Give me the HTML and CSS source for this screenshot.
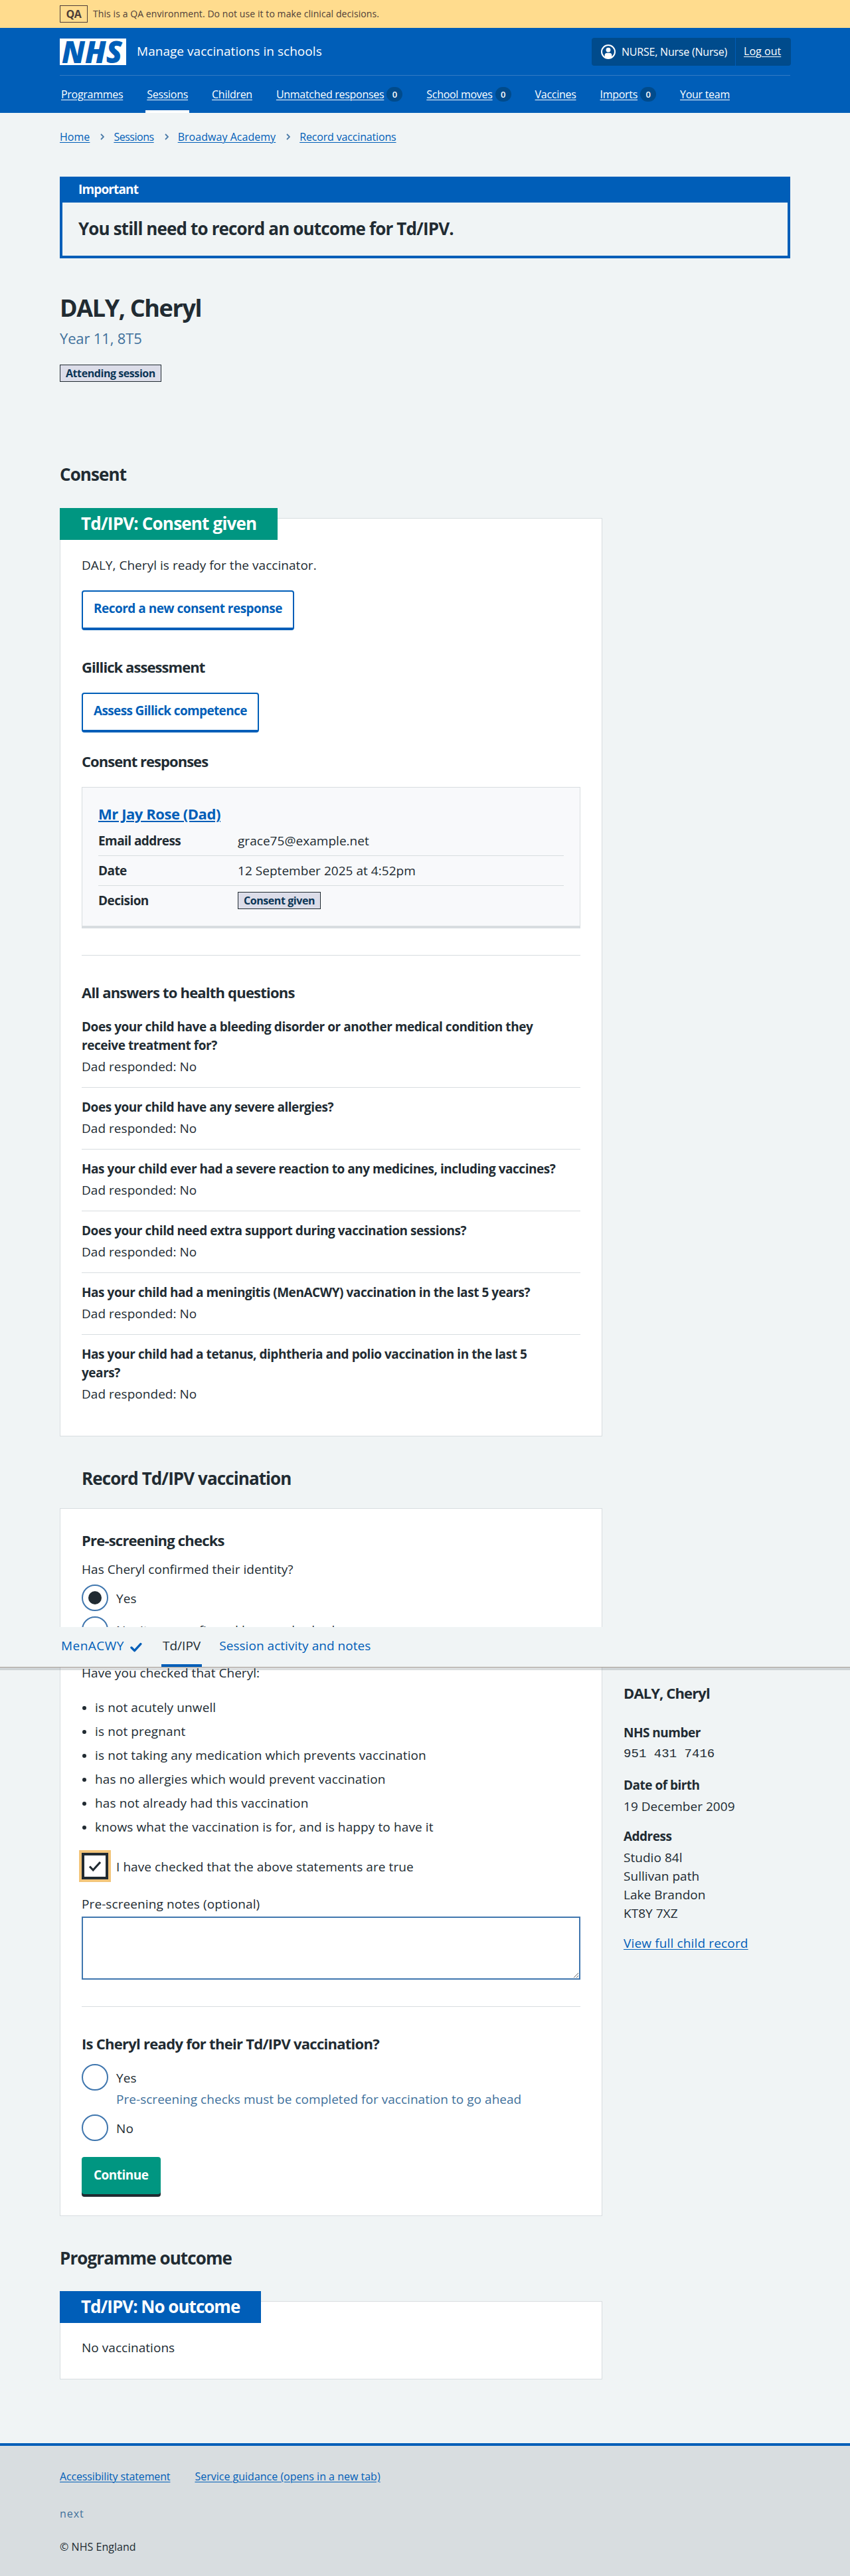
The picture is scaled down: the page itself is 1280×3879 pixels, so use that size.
FILE: index.html
```html
<!DOCTYPE html>
<html lang="en">
<head>
<meta charset="utf-8">
<title>DALY, Cheryl – Manage vaccinations in schools</title>
<link rel="stylesheet" href="styles.css">
</head>
<body>
<div class="environment">
  <div class="container environment__row"><strong class="environment__tag">QA</strong><span class="environment__text">This is a QA environment. Do not use it to make clinical decisions.</span></div>
</div>
<header class="header">
  <div class="container">
    <div class="header__top">
      <a class="header__service" href="#">
        <svg class="logo" viewBox="0 0 100 40" width="100" height="40" role="img" aria-label="NHS"><rect width="100" height="40" fill="#fff"/><text x="3" y="36.5" textLength="91" lengthAdjust="spacingAndGlyphs" class="logo__text">NHS</text></svg>
        <span class="header__name">Manage vaccinations in schools</span>
      </a>
      <div class="account">
        <span class="account__user"><svg width="22" height="22" viewBox="0 0 22 22"><circle cx="11" cy="11" r="10" fill="none" stroke="#fff" stroke-width="2"/><circle cx="11" cy="8.2" r="3.4" fill="#fff"/><path d="M5.6 19v-2.6a3.6 3.6 0 0 1 3.6-3.6h3.6a3.6 3.6 0 0 1 3.6 3.6V19a10 10 0 0 1-10.8 0z" fill="#fff"/></svg>NURSE, Nurse (Nurse)</span>
        <a class="account__logout" href="#">Log out</a>
      </div>
    </div>
    <nav class="nav">
      <a class="nav__item" href="#"><span>Programmes</span></a>
      <a class="nav__item nav__item--current" href="#"><span>Sessions</span></a>
      <a class="nav__item" href="#"><span>Children</span></a>
      <a class="nav__item" href="#"><span>Unmatched responses</span><b class="count">0</b></a>
      <a class="nav__item" href="#"><span>School moves</span><b class="count">0</b></a>
      <a class="nav__item" href="#"><span>Vaccines</span></a>
      <a class="nav__item" href="#"><span>Imports</span><b class="count">0</b></a>
      <a class="nav__item" href="#"><span>Your team</span></a>
    </nav>
  </div>
</header>

<div class="container page">
  <nav class="breadcrumb">
    <a href="#">Home</a><svg class="chevron" viewBox="0 0 6 10"><path d="M1 1l4 4-4 4"/></svg><a class="breadcrumb__tight" href="#">Sessions</a><svg class="chevron" viewBox="0 0 6 10"><path d="M1 1l4 4-4 4"/></svg><a href="#">Broadway Academy</a><svg class="chevron" viewBox="0 0 6 10"><path d="M1 1l4 4-4 4"/></svg><a class="breadcrumb__last" href="#">Record vaccinations</a>
  </nav>

  <section class="banner">
    <h2 class="banner__title">Important</h2>
    <p class="banner__text">You still need to record an outcome for Td/IPV.</p>
  </section>

  <h1 class="title">DALY, Cheryl</h1>
  <p class="caption">Year 11, 8T5</p>
  <strong class="tag">Attending session</strong>

  <div class="columns">
    <main class="main">
      <h2 class="heading-m">Consent</h2>
      <section class="card card--feature">
        <h3 class="card__tab card__tab--green">Td/IPV: Consent given</h3>
        <p class="card__intro">DALY, Cheryl is ready for the vaccinator.</p>
        <a class="button button--secondary" href="#">Record a new consent response</a>
        <h4 class="heading-s heading-s--spaced">Gillick assessment</h4>
        <a class="button button--secondary button--tight" href="#">Assess Gillick competence</a>
        <h4 class="heading-s heading-s--responses">Consent responses</h4>
        <article class="response">
          <h5 class="response__name"><a href="#">Mr Jay Rose (Dad)</a></h5>
          <dl class="summary">
            <div class="summary__row"><dt>Email address</dt><dd>grace75@example.net</dd></div>
            <div class="summary__row"><dt>Date</dt><dd>12 September 2025 at 4:52pm</dd></div>
            <div class="summary__row"><dt>Decision</dt><dd><strong class="tag">Consent given</strong></dd></div>
          </dl>
        </article>
        <hr class="rule">
        <h4 class="heading-s">All answers to health questions</h4>
        <dl class="answers">
          <div class="answers__item"><dt>Does your child have a bleeding disorder or another medical condition they receive treatment for?</dt><dd>Dad responded: No</dd></div>
          <div class="answers__item"><dt>Does your child have any severe allergies?</dt><dd>Dad responded: No</dd></div>
          <div class="answers__item"><dt>Has your child ever had a severe reaction to any medicines, including vaccines?</dt><dd>Dad responded: No</dd></div>
          <div class="answers__item"><dt>Does your child need extra support during vaccination sessions?</dt><dd>Dad responded: No</dd></div>
          <div class="answers__item"><dt>Has your child had a meningitis (MenACWY) vaccination in the last 5 years?</dt><dd>Dad responded: No</dd></div>
          <div class="answers__item"><dt>Has your child had a tetanus, diphtheria and polio vaccination in the last 5 years?</dt><dd>Dad responded: No</dd></div>
        </dl>
      </section>

      <h2 class="heading-m heading-m--record">Record Td/IPV vaccination</h2>
      <form class="card card--form">
        <h3 class="heading-s">Pre-screening checks</h3>
        <p class="question">Has Cheryl confirmed their identity?</p>
        <div class="option"><span class="radio radio--checked"></span><label>Yes</label></div>
        <div class="option"><span class="radio"></span><label>No, it was confirmed by somebody else</label></div>
        <p class="checked-that">Have you checked that Cheryl:</p>
        <ul class="bullets">
          <li>is not acutely unwell</li>
          <li>is not pregnant</li>
          <li>is not taking any medication which prevents vaccination</li>
          <li>has no allergies which would prevent vaccination</li>
          <li>has not already had this vaccination</li>
          <li>knows what the vaccination is for, and is happy to have it</li>
        </ul>
        <div class="option"><span class="checkbox"><svg width="20" height="17" viewBox="0 0 20 17"><path d="M2 8.5l5.2 5.5L18 2"/></svg></span><label>I have checked that the above statements are true</label></div>
        <label class="notes-label">Pre-screening notes (optional)</label>
        <textarea class="notes"></textarea>
        <hr class="rule">
        <h3 class="heading-s heading-s--ready">Is Cheryl ready for their Td/IPV vaccination?</h3>
        <div class="option"><span class="radio"></span><label>Yes</label></div>
        <p class="hint">Pre-screening checks must be completed for vaccination to go ahead</p>
        <div class="option"><span class="radio"></span><label>No</label></div>
        <a class="button button--primary" href="#">Continue</a>
      </form>

      <h2 class="heading-m heading-m--outcome">Programme outcome</h2>
      <section class="card card--outcome">
        <h3 class="card__tab card__tab--blue">Td/IPV: No outcome</h3>
        <p class="card__empty">No vaccinations</p>
      </section>
    </main>

    <aside class="child">
      <h3 class="heading-s">DALY, Cheryl</h3>
      <dl class="details">
        <dt>NHS number</dt><dd class="details__number">951 431 7416</dd>
        <dt>Date of birth</dt><dd>19 December 2009</dd>
        <dt>Address</dt><dd>Studio 84l<br>Sullivan path<br>Lake Brandon<br>KT8Y 7XZ</dd>
      </dl>
      <a class="child__link" href="#">View full child record</a>
    </aside>
  </div>
</div>

<nav class="tabs">
  <div class="container tabs__list">
    <a class="tabs__item tabs__item--done" href="#">MenACWY<svg width="18" height="15" viewBox="0 0 18 15"><path d="M2 8l4.6 4.6L15.8 2.6"/></svg></a>
    <a class="tabs__item tabs__item--current" href="#">Td/IPV</a>
    <a class="tabs__item" href="#">Session activity and notes</a>
  </div>
</nav>

<footer class="footer">
  <div class="container">
    <div class="footer__links"><a href="#">Accessibility statement</a><a href="#">Service guidance (opens in a new tab)</a></div>
    <p class="footer__version">next</p>
    <p class="footer__copyright">© NHS England</p>
  </div>
</footer>
</body>
</html>
```
FILE: styles.css
```css
* { box-sizing: border-box; }
body, h1, h2, h3, h4, h5, p, dl, dd, ul, hr { margin: 0; padding: 0; }
body {
  position: relative;
  background: #f0f4f5;
  color: #212b32;
  font: 400 19px/28px "Open Sans", "Noto Sans", sans-serif;
  letter-spacing: 0.002em;
}
a { color: #005eb8; text-decoration-thickness: 1px; text-underline-offset: 2px; }
svg { flex: none; }
.container { width: 1100px; margin: 0 auto; }

.environment { height: 42px; background: #ffdc8e; color: #4d3c38; }
.environment__row { display: flex; align-items: center; height: 42px; gap: 8px; font-size: 14px; }
.environment__tag { height: 26px; width: 42px; border: 1px solid; text-align: center; font-size: 16px; font-weight: 700; line-height: 24px; letter-spacing: -0.03em; }
.environment__text { letter-spacing: 0.006em; }

.header { height: 128px; background: #005eb8; color: #fff; }
.header a { color: #fff; }
.header__top { display: flex; justify-content: space-between; padding: 15px 0 14px; border-bottom: 1px solid #337ac3; }
.header__service { display: flex; align-items: center; gap: 16px; text-decoration: none; }
.header__name { padding-bottom: 3px; }
.logo__text { font: italic 800 46px "Open Sans", sans-serif; letter-spacing: 0; fill: #005eb8; }
.account { display: flex; width: 300px; height: 42px; margin-right: -1px; border-radius: 4px; background: #004b8c; font-size: 16px; line-height: 40px; }
.account__user { display: flex; align-items: center; gap: 9px; width: 217px; padding-left: 14px; border-right: 1px solid #005eb8; letter-spacing: -0.013em; white-space: nowrap; }
.account__logout { padding-left: 12px; }
.nav { display: flex; gap: 32px; font-size: 16px; letter-spacing: -0.018em; }
.nav__item { display: flex; align-items: center; gap: 4px; height: 56px; padding: 0 2px; text-decoration: none; white-space: nowrap; }
.nav__item span { text-decoration: underline 1px; text-underline-offset: 2px; }
.nav__item--current { box-shadow: inset 0 -4px #fff; }
.count { width: 24px; height: 22px; border-radius: 11px; background: #004b8c; font-size: 13px; font-weight: 600; line-height: 22px; text-align: center; }

.breadcrumb { display: flex; align-items: center; padding-top: 24px; font-size: 16px; line-height: 24px; }
.breadcrumb__tight { letter-spacing: -0.03em; }
.breadcrumb__last { letter-spacing: -0.01em; }
.chevron { width: 6px; height: 10px; margin: 0 14px 0 16px; fill: none; stroke: #4c7ba8; stroke-width: 1.8; }

.banner { margin-top: 48px; border: 4px solid #005eb8; border-top: 0; }
.banner__title { height: 39px; padding: 5px 24px; background: #005eb8; color: #fff; font-size: 19px; font-weight: 700; line-height: 28px; letter-spacing: -0.045em; }
.banner__text { padding: 23px 24px 25px; font-size: 26px; font-weight: 700; line-height: 32px; letter-spacing: -0.033em; }

.title { margin-top: 53px; font-size: 36px; font-weight: 700; line-height: 44px; letter-spacing: -0.038em; }
.caption { margin-top: 7px; color: #41719c; font-size: 22px; line-height: 32px; letter-spacing: -0.007em; }
.tag { display: block; width: fit-content; height: 26px; padding: 0 8px; border: 1px solid #212b32; background: #dcdde9; color: #0b3556; font-size: 16px; font-weight: 700; line-height: 24px; letter-spacing: -0.027em; }
.page > .tag { margin-top: 24px; }

.columns { display: grid; grid-template-columns: 817px 1fr; gap: 32px; margin-top: 123px; }
.heading-m { font-size: 26px; font-weight: 700; line-height: 32px; letter-spacing: -0.035em; }
.heading-m--record { margin: 47px 0 0 33px; }
.heading-m--outcome { margin-top: 47px; }
.heading-s { font-size: 22px; font-weight: 700; line-height: 30px; letter-spacing: -0.036em; }
.heading-s--spaced { margin: 40px 0 24px; letter-spacing: -0.042em; }
.heading-s--responses { margin: 28px 0 24px; letter-spacing: -0.044em; }

.card { padding: 0 32px; border: 1px solid #d8dde0; background: #fff; }
.card--feature { margin-top: 50px; padding-bottom: 49px; }
.card--form { margin-top: 29px; padding-top: 32px; padding-bottom: 28px; }
.card--outcome { margin-top: 49px; padding-bottom: 33px; }
.card__tab { width: fit-content; margin: -16px 0 0 -33px; padding: 7px 32px 9px; color: #fff; font-size: 26px; font-weight: 700; line-height: 32px; letter-spacing: -0.031em; }
.card__tab--green { background: #009681; }
.card__tab--blue { background: #005eb8; letter-spacing: -0.038em; }
.card__intro { margin: 24px 0; }
.card__empty { margin-top: 23px; }

.button { display: block; width: fit-content; height: 60px; padding: 11px 16px 15px; border: 2px solid #005eb8; border-bottom-width: 4px; border-radius: 4px; font-weight: 700; letter-spacing: -0.027em; text-decoration: none; }
.button--secondary { background: #fff; }
.button--tight { letter-spacing: -0.034em; }
.button--primary { height: 56px; margin: 24px 0 4px; padding: 13px 18px 15px; border: 0; background: #009681; box-shadow: 0 4px #212b32; color: #fff; }

.response { padding: 24px; border: 1px solid #d8dde0; border-bottom-width: 4px; background: #f8f9fb; }
.response__name { font-size: 22px; font-weight: 700; line-height: 30px; letter-spacing: -0.02em; }
.response__name a { text-decoration-thickness: 2px; }
.summary { margin-top: 4px; }
.summary__row { display: grid; grid-template-columns: 210px 1fr; padding: 8px 0; border-bottom: 1px solid #d8dde0; }
.summary__row:last-child { padding-bottom: 0; border: 0; }
.summary dt { font-weight: 700; letter-spacing: -0.03em; }
.summary .tag { margin: 1px 0; }
.rule { height: 1px; margin: 40px 0; border: 0; background: #d8dde0; }

.answers { margin-top: 23px; }
.answers__item { padding-bottom: 17px; margin-bottom: 15px; border-bottom: 1px solid #d8dde0; }
.answers__item:last-child { margin: 0; padding: 0; border: 0; }
.answers dt { margin-bottom: 4px; padding-right: 30px; font-weight: 700; letter-spacing: -0.024em; }

.question { margin: 15px 0 9px; }
.option { display: flex; align-items: center; gap: 12px; height: 40px; }
.option + .option { margin-top: 8px; }
.option label { padding-top: 1px; letter-spacing: 0.004em; }
.radio { display: grid; place-items: center; width: 40px; height: 40px; border: 2px solid #3f76ae; border-radius: 50%; background: #fff; }
.radio--checked::after { content: ""; width: 20px; height: 20px; border-radius: 50%; background: #212b32; }
.checked-that { margin-top: 31px; }
.bullets { display: flex; flex-direction: column; gap: 8px; margin: 24px 0 25px; padding-left: 20px; letter-spacing: 0.006em; }
.bullets li::marker { font-size: 17px; }
.checkbox { display: grid; place-items: center; width: 40px; height: 40px; border: 4px solid #212b32; outline: 4px solid #f3c57a; background: #fff; }
.checkbox path { fill: none; stroke: #212b32; stroke-width: 3.2; }
.notes-label { display: block; margin-top: 23px; letter-spacing: 0.005em; }
.notes { display: block; width: 100%; height: 95px; margin-top: 5px; border: 2px solid #3f76ae; border-radius: 0; background: #fff; }
.heading-s--ready { margin-bottom: 16px; letter-spacing: -0.033em; }
.hint { margin: -1px 0 9px 52px; color: #41719c; }

.child { padding-top: 1836px; }
.child .heading-s { letter-spacing: -0.04em; }
.details { margin-top: 31px; }
.details dt { font-weight: 700; letter-spacing: -0.027em; }
.details dd { margin: 4px 0 17px; }
.details .details__number { margin-bottom: 19px; font-family: "Liberation Mono", monospace; }
.child__link { letter-spacing: 0.008em; }

.tabs { position: absolute; top: 2450px; left: 0; right: 0; height: 61px; border-bottom: 1px solid #aaa098; background: #f0f4f5; box-shadow: 0 4px rgba(33, 43, 50, 0.16); }
.tabs__list { display: flex; gap: 24px; }
.tabs__item { display: flex; align-items: center; gap: 9px; height: 60px; padding: 0 2px 4px; text-decoration: none; }
.tabs__item svg { margin-top: 5px; }
.tabs__item path { fill: none; stroke: #005eb8; stroke-width: 3.4; stroke-linecap: round; stroke-linejoin: round; }
.tabs__item--done { margin-right: 3px; letter-spacing: 0.025em; }
.tabs__item--current { color: #212b32; box-shadow: inset 0 -4px #005eb8; }

.footer { height: 200px; margin-top: 96px; padding-top: 34px; border-top: 4px solid #005eb8; background: #d8dde0; font-size: 16px; line-height: 24px; }
.footer__links { display: flex; gap: 37px; letter-spacing: -0.009em; }
.footer__links a + a { letter-spacing: 0; }
.footer__version { margin: 32px 0 26px; color: #41719c; letter-spacing: 0.06em; }
```
